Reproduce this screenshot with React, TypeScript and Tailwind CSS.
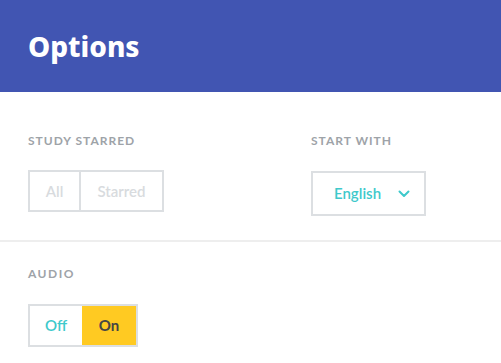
import React from "react";

export default function App() {
  const font = { fontFamily: "Lato, 'Noto Sans', sans-serif" };
  return (
    <div className="w-[501px] h-[363px] bg-white overflow-hidden" style={font}>
      <div className="h-[92px] bg-[#4155b2] flex items-center px-7">
        <h1 className="text-white text-[28px] font-extrabold tracking-[0px] leading-none" style={{ fontFamily: "'Noto Sans', sans-serif" }}>Options</h1>
      </div>
      <div className="flex pl-7 pt-[41px] pb-[24px] border-b-2 border-[#eeeeee]">
        <div className="w-[283px]">
          <div className="text-[12px] font-bold tracking-[1px] text-[#9ea3a8] leading-4">STUDY STARRED</div>
          <div className="mt-[21px] flex w-[136px] h-[42px] border-2 border-[#dcdfe2]">
            <button className="w-[51px] border-r-2 border-[#dcdfe2] text-[15px] font-semibold text-[#d8dbde]">All</button>
            <button className="flex-1 text-[15px] font-semibold text-[#d8dbde]">Starred</button>
          </div>
        </div>
        <div>
          <div className="text-[12px] font-bold tracking-[1px] text-[#9ea3a8] leading-4">START WITH</div>
          <div className="mt-[22px] flex items-center w-[115px] h-[45px] border-2 border-[#dcdfe2] pl-[21px] pr-[14px]">
            <span className="text-[15px] font-semibold text-[#3ec9cb] flex-1">English</span>
            <svg width="12" height="8" viewBox="0 0 12 8" fill="none">
              <path d="M1.5 1.5 L6 6 L10.5 1.5" stroke="#3ec9cb" strokeWidth="2" strokeLinecap="round" strokeLinejoin="round" />
            </svg>
          </div>
        </div>
      </div>
      <div className="pl-7 pt-[24px]">
        <div className="text-[12px] font-bold tracking-[1.5px] text-[#9ea3a8] leading-4">AUDIO</div>
        <div className="mt-[22px] flex w-[110px] h-[43px] border-2 border-[#dcdfe2]">
          <button className="w-[52px] text-[15px] font-semibold text-[#3ec9cb]">Off</button>
          <button className="flex-1 bg-[#ffca22] text-[15px] font-bold text-[#454545]">On</button>
        </div>
      </div>
    </div>
  );
}
